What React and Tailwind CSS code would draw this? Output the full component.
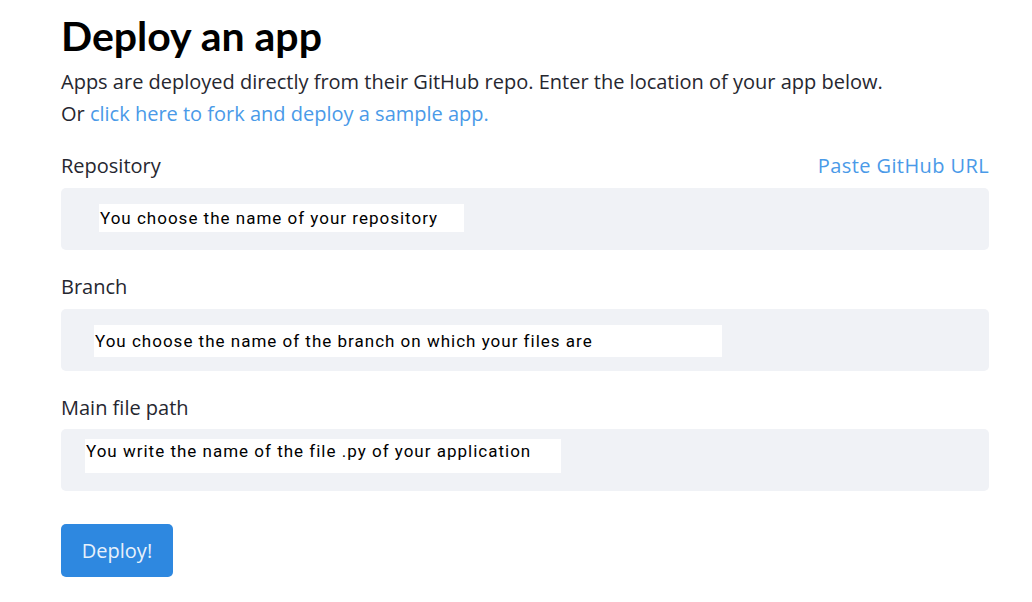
export default function App() {
  const note = "bg-white text-black text-[17px] leading-none flex items-center pl-px [font-family:Roboto,'DejaVu_Sans',sans-serif] tracking-[1px]";

  return (
    <div className="min-h-[602px] w-[1032px] bg-white text-[#262730] [font-family:'Open_Sans',Lato,sans-serif]">
      <div className="pl-[61px] pr-[43px] pt-[12px]">
        <h1 className="text-[41px] font-bold leading-[48px] text-black [font-family:Lato,'Open_Sans',sans-serif]">
          Deploy an app
        </h1>
        <p className="mt-[6px] text-[20px] leading-[32px]">
          Apps are deployed directly from their GitHub repo. Enter the location of your app below.
        </p>
        <p className="text-[20px] leading-[32px]">
          Or <span className="text-[#4a9ae8]">click here to fork and deploy a sample app.</span>
        </p>

        <div className="mt-[24px] flex items-center justify-between text-[20px] leading-[24px]">
          <span>Repository</span>
          <span className="text-[#4a9ae8] tracking-[0.4px]">Paste GitHub URL</span>
        </div>
        <div className="mt-[10px] h-[62px] rounded-[5px] bg-[#f0f2f6] pl-[38px] pt-[16px]">
          <div className={note + " h-[28px] w-[365px]"}>You choose the name of your repository</div>
        </div>

        <div className="mt-[25px] text-[20px] leading-[24px]">Branch</div>
        <div className="mt-[10px] h-[62px] rounded-[5px] bg-[#f0f2f6] pl-[33px] pt-[16px]">
          <div className={note + " h-[32px] w-[628px]"}>You choose the name of the branch on which your files are</div>
        </div>

        <div className="mt-[25px] text-[20px] leading-[24px]">Main file path</div>
        <div className="mt-[9px] h-[62px] rounded-[5px] bg-[#f0f2f6] pl-[24px] pt-[10px]">
          <div className={note + " h-[34px] w-[476px] items-start pt-[4px]"}>You write the name of the file .py of your application</div>
        </div>

        <button className="mt-[33px] h-[53px] w-[112px] rounded-[5px] bg-[#2e88e0] text-[20px] text-[#e8f1fb]">
          Deploy!
        </button>
      </div>
    </div>
  );
}
